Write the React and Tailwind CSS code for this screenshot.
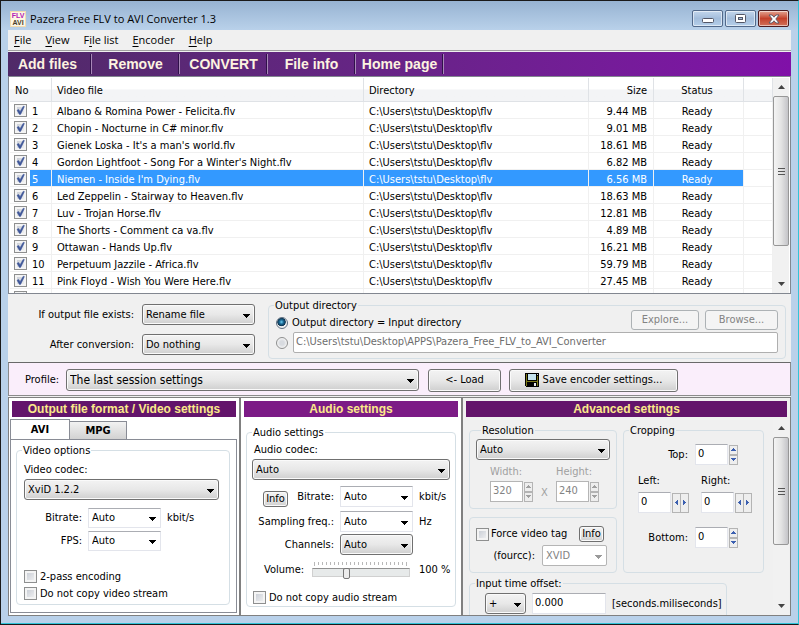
import React from "react";

const files = [
  ["Albano & Romina Power - Felicita.flv", "9.44 MB"],
  ["Chopin - Nocturne in C# minor.flv", "9.01 MB"],
  ["Gienek Loska - It's a man's world.flv", "18.61 MB"],
  ["Gordon Lightfoot - Song For a Winter's Night.flv", "6.82 MB"],
  ["Niemen - Inside I'm Dying.flv", "6.56 MB"],
  ["Led Zeppelin - Stairway to Heaven.flv", "18.63 MB"],
  ["Luv - Trojan Horse.flv", "12.81 MB"],
  ["The Shorts - Comment ca va.flv", "4.89 MB"],
  ["Ottawan - Hands Up.flv", "16.21 MB"],
  ["Perpetuum Jazzile - Africa.flv", "59.79 MB"],
  ["Pink Floyd - Wish You Were Here.flv", "27.45 MB"],
  ["", ""],
];

const raised =
  "rounded-[3px] border border-[#707070] bg-linear-to-b from-[#f3f3f3] via-[#e8e8e8] to-[#cfcfcf] shadow-[inset_0_0_0_1px_#fafafa]";
const flat = "border border-[#e3e5ec] border-t-[#abadb3] bg-white";

function Select({ className = "", look = "raised", value, disabled, arrow = "right-[5px]", ...rest }) {
  const style =
    look === "raised"
      ? raised
      : disabled
        ? "rounded-[2px] border border-[#b5b5b5] bg-white text-[#838383]"
        : flat;
  return (
    <span className={`relative block ${className}`}>
      <select
        className={`block h-full w-full appearance-none pr-4 pl-[3px] opacity-100 outline-none ${style}`}
        defaultValue={value}
        disabled={disabled}
        {...rest}
      >
        <option>{value}</option>
      </select>
      <svg
        viewBox="0 0 7 4"
        shapeRendering="crispEdges"
        className={`pointer-events-none absolute top-1/2 h-1 w-[7px] -translate-y-px ${arrow} ${disabled ? "text-[#9a9a9a]" : "text-black"}`}
      >
        <path d="M0 0h7v1H6v1H5v1H4v1H3V3H2V2H1V1H0z" fill="currentColor" />
      </svg>
    </span>
  );
}

function Check({ checked, ...rest }) {
  return (
    <span className="grid size-[13px] shrink-0">
      <input
        type="checkbox"
        defaultChecked={checked}
        className="peer col-start-1 row-start-1 size-[13px] appearance-none border border-[#8e8f8f] bg-linear-to-br from-[#c3c8d1] to-[#f6f6f6] shadow-[inset_0_0_0_2px_#f4f4f4]"
        {...rest}
      />
      <svg viewBox="0 0 13 13" className="pointer-events-none invisible col-start-1 row-start-1 size-[13px] peer-checked:visible">
        <path d="M3 6.2 4.8 5.6 6 7.8 9.3 2.2 10.4 2.6 6.6 10.4 5.4 10.4z" fill="#3f5799" stroke="#3f5799" strokeWidth=".5" />
      </svg>
    </span>
  );
}

function Radio(props) {
  return (
    <input
      type="radio"
      className="size-3 shrink-0 appearance-none rounded-full border border-[#8e8f8f] bg-[radial-gradient(circle,#d8dbe0_30%,#f4f4f4_70%)] checked:border-[#5f6f80] checked:bg-[radial-gradient(circle_at_45%_40%,#6fd0f4_0%,#1b6a95_25%,#0c3350_48%,#f0f0f0_56%)]"
      {...props}
    />
  );
}

function Group({ title, className = "", children }) {
  return (
    <fieldset className={`min-w-0 rounded-[4px] border border-[#d5dfe5] ${className}`}>
      {title && <legend className="ml-[5px] h-[10px] px-px leading-[12px] whitespace-nowrap">{title}</legend>}
      {children}
    </fieldset>
  );
}

function Tri({ dir, disabled }) {
  const d = {
    up: "M2 0h1v1h1v1h1v1H0V2h1V1h1z",
    down: "M0 0h5v1H4v1H3v1H2V2H1V1H0z",
    left: "M2 0h1v5H2V4H1V3H0V2h1V1h1z",
    right: "M0 0h1v1h1v1h1v1H2v1H1v1H0z",
  }[dir];
  const vertical = dir === "up" || dir === "down";
  return (
    <svg viewBox={vertical ? "0 0 5 3" : "0 0 3 5"} shapeRendering="crispEdges" className={vertical ? "h-[3px] w-[5px]" : "h-[5px] w-[3px]"}>
      <path d={d} fill={disabled ? "#a0a0a0" : "#3b5fb0"} />
    </svg>
  );
}

const spin = "flex items-center justify-center border border-[#b4b4b4] bg-[#eeeeee]";

function Stepper({ label, value, disabled, horizontal, id }) {
  return (
    <span className="flex items-center gap-px">
      <input
        id={id}
        type="text"
        defaultValue={value}
        disabled={disabled}
        className={`h-[21px] w-[33px] px-[2px] pb-[2px] outline-none ${disabled ? "border border-[#b5b5b5] bg-white text-[#838383]" : flat}`}
      />
      {horizontal ? (
        <span className="flex">
          <button aria-label={`Decrease ${label}`} className={`h-5 w-[9px] ${spin}`}><Tri dir="left" /></button>
          <button aria-label={`Increase ${label}`} className={`-ml-px h-5 w-[9px] ${spin}`}><Tri dir="right" /></button>
        </span>
      ) : (
        <span className="flex flex-col">
          <button aria-label={`Increase ${label}`} disabled={disabled} className={`h-[10px] w-[9px] ${spin}`}><Tri dir="up" disabled={disabled} /></button>
          <button aria-label={`Decrease ${label}`} disabled={disabled} className={`h-[10px] w-[9px] ${spin}`}><Tri dir="down" disabled={disabled} /></button>
        </span>
      )}
    </span>
  );
}

function ScrollBar({ thumb }) {
  return (
    <div className="flex w-4 shrink-0 flex-col bg-[#f1f1f1]">
      <button aria-label="Scroll up" className="flex h-[18px] items-center justify-center">
        <svg viewBox="0 0 7 4" className="h-1 w-[7px]"><path d="M3.5 0 7 4H0z" fill="#444" /></svg>
      </button>
      <div className={`flex flex-col items-center justify-center gap-[2px] rounded-[2px] border border-[#979797] bg-linear-to-r from-[#f4f4f4] via-[#e4e4e4] to-[#c4c4c8] ${thumb}`}>
        <i className="h-px w-[7px] bg-[#555]" />
        <i className="h-px w-[7px] bg-[#555]" />
        <i className="h-px w-[7px] bg-[#555]" />
      </div>
      <span className="flex-1" />
      <button aria-label="Scroll down" className="flex h-[18px] items-center justify-center">
        <svg viewBox="0 0 7 4" className="h-1 w-[7px]"><path d="M3.5 4 7 0H0z" fill="#444" /></svg>
      </button>
    </div>
  );
}

const heading = "h-4 shrink-0 text-center font-['Liberation_Sans',Arial,sans-serif] text-[12px] leading-4 font-bold text-[#fbe98a]";
const winButton = "flex h-[17px] items-center justify-center rounded-[2px] border shadow-[inset_0_0_0_1px_rgba(255,255,255,0.55)]";

function TitleBar() {
  return (
    <header className="flex h-[29px] shrink-0 items-center bg-linear-to-b from-[#97b3d2] to-[#b9d1ea] pr-[9px] pl-[9px]">
      <svg viewBox="0 0 16 16" className="mt-[6px] size-4" fontFamily="'Liberation Sans',Arial,sans-serif" fontWeight="bold" fontSize="7">
        <rect width="16" height="16" fill="#f3dcae" />
        <rect x="1" y="1" width="14" height="14" fill="#fdf6e4" />
        <text x="8" y="7" textAnchor="middle" fill="#b321b5">FLV</text>
        <text x="8" y="14" textAnchor="middle" fill="#4a3f2a">AVI</text>
      </svg>
      <h1 className="mt-[6px] ml-1 flex-1 font-['Open_Sans','Noto_Sans',sans-serif] text-[11px] leading-4 whitespace-nowrap">
        Pazera Free FLV to AVI Converter 1.3
      </h1>
      <div className="mt-[6px] flex gap-[2px]">
        <button aria-label="Minimize" className={`w-[31px] border-[#52698a] bg-linear-to-b from-[#c3d6ec] via-[#a3bddb] to-[#b5cfea] ${winButton}`}>
          <svg viewBox="0 0 12 5" className="mt-[3px] h-[5px] w-3"><rect x=".5" y=".5" width="11" height="4" rx="1" fill="#fff" stroke="#535666" /></svg>
        </button>
        <button aria-label="Maximize" className={`w-[31px] border-[#52698a] bg-linear-to-b from-[#c3d6ec] via-[#a3bddb] to-[#b5cfea] ${winButton}`}>
          <svg viewBox="0 0 11 9" className="h-[9px] w-[11px]">
            <rect x=".5" y=".5" width="10" height="8" rx="1" fill="#fff" stroke="#535666" />
            <rect x="3.5" y="3.5" width="4" height="2" fill="#a3bddb" stroke="#535666" />
          </svg>
        </button>
        <button aria-label="Close" className={`w-[31px] border-[#4b1a1f] bg-linear-to-b from-[#e2a493] via-[#c4402a] to-[#d0705a] ${winButton}`}>
          <svg viewBox="0 0 12 10" className="h-[10px] w-3">
            <path d="M1 1h3l2 2.2L8 1h3L7.8 5 11 9H8L6 6.8 4 9H1l3.200-4z" fill="#fff" stroke="#535666" strokeWidth=".9" />
          </svg>
        </button>
      </div>
    </header>
  );
}

function FileList() {
  const cell = "border-r border-b border-[#f0f0f0] p-0";
  const text = "block pt-1 leading-[12px]";
  return (
    <section className="flex h-[218px] shrink-0 border border-[#828790] bg-white pt-px pr-px pl-px">
      <div className="min-w-0 flex-1 overflow-hidden">
        <table className="w-full table-fixed border-separate border-spacing-0">
          <colgroup>
            <col className="w-[42px]" />
            <col />
            <col className="w-[225px]" />
            <col className="w-[65px]" />
            <col className="w-[90px]" />
            <col className="w-[29px]" />
          </colgroup>
          <thead>
            <tr className="h-6 bg-linear-to-b from-white from-45% to-[#f3f4f6] to-50% text-left [&>th]:border-r [&>th]:border-b [&>th]:border-[#dfe2e6] [&>th]:pt-[2px] [&>th]:font-normal">
              <th className="pl-[5px]">No</th>
              <th className="pl-[5px]">Video file</th>
              <th className="pl-[5px]">Directory</th>
              <th className="pr-[6px] text-right">Size</th>
              <th className="pr-[3px] text-center">Status</th>
              <th aria-label="Spare" />
            </tr>
          </thead>
          <tbody>
            {files.map(([name, size], i) => {
              const on = i === 4 ? "bg-[#3399ff] text-white" : "";
              return (
                <tr key={i} className="h-[17px] whitespace-nowrap">
                  <td className={cell}>
                    <span className="flex h-4 items-center">
                      <span className="flex w-5 justify-center"><Check checked aria-label={`Convert ${name || "next file"}`} /></span>
                      <span className={`h-4 flex-1 pl-[2px] ${text} ${on}`}>{name && i + 1}</span>
                    </span>
                  </td>
                  <td className={`${cell} ${on}`}><span className={`pl-[5px] ${text}`}>{name}</span></td>
                  <td className={`${cell} ${on}`}><span className={`pl-[5px] ${text}`}>{name && "C:\\Users\\tstu\\Desktop\\flv"}</span></td>
                  <td className={`${cell} ${on} text-right`}><span className={`pr-[6px] ${text}`}>{size}</span></td>
                  <td className={`${cell} ${on} text-center`}><span className={`pr-[3px] ${text}`}>{name && "Ready"}</span></td>
                  <td className={cell} />
                </tr>
              );
            })}
          </tbody>
        </table>
      </div>
      <ScrollBar thumb="h-[150px]" />
    </section>
  );
}

function Options() {
  const off = "h-5 rounded-[3px] border border-[#adb2b5] bg-[#f4f4f4] text-[#838383]";
  return (
    <section className="flex h-[68px] shrink-0 gap-[13px] pr-[5px]">
      <div className="grid w-[247px] content-start items-center justify-end gap-x-2 gap-y-[9px] pt-[10px] [grid-template-columns:auto_113px]">
        <label htmlFor="exists" className="text-right">If output file exists:</label>
        <Select id="exists" value="Rename file" className="h-[21px]" />
        <label htmlFor="after" className="text-right">After conversion:</label>
        <Select id="after" value="Do nothing" className="h-[21px]" />
      </div>
      <Group title="Output directory" className="mt-[6px] mb-[3px] flex-1">
        <div className="flex h-5 items-end gap-[6px] pr-[7px] pl-[7px]">
          <label className="flex flex-1 items-center gap-1 whitespace-nowrap">
            <Radio name="out" defaultChecked />
            Output directory = Input directory
          </label>
          <button disabled className={`w-[68px] ${off}`}>Explore...</button>
          <button disabled className={`w-[73px] ${off}`}>Browse...</button>
        </div>
        <div className="mt-[2px] flex h-[21px] items-center gap-[5px] pr-[7px] pl-[7px]">
          <Radio name="out" aria-label="Other directory" />
          <input
            aria-label="Output path"
            disabled
            defaultValue="C:\Users\tstu\Desktop\APPS\Pazera_Free_FLV_to_AVI_Converter"
            className="h-[21px] min-w-0 flex-1 rounded-[2px] border border-[#afafaf] bg-white px-[2px] pb-[2px] text-[#6d6d6d]"
          />
        </div>
      </Group>
    </section>
  );
}

function ProfileBar() {
  return (
    <section className="flex h-[34px] shrink-0 items-center border border-[#8b8b8b] border-t-[#696969] bg-[#faeefb] pt-[2px] pl-4">
      <label htmlFor="profile" className="w-[41px]">Profile:</label>
      <Select id="profile" value="The last session settings" className="h-[22px] w-[353px] text-[12px]" />
      <button className={`ml-[9px] h-[23px] w-[73px] ${raised}`}>&lt;- Load</button>
      <button className={`ml-2 flex h-[23px] w-[169px] items-center justify-center gap-1 whitespace-nowrap ${raised}`}>
        <svg viewBox="0 0 14 14" shapeRendering="crispEdges" className="size-[14px]">
          <path d="M0 0h14v14H1l-1-1z" fill="#000" />
          <path d="M1 1h1v12H1zM12 3h1v10h-1zM2 8h10v1H2z" fill="#7c7a18" />
          <path d="M3 1h8v6H3z" fill="#c5e3ee" />
          <path d="M12 1h1v1h-1z" fill="#d8d8d8" />
          <path d="M9 10h2v3H9z" fill="#e8e8e8" />
        </svg>
        Save encoder settings...
      </button>
    </section>
  );
}

function VideoPanel() {
  const tab = "border border-b-0 border-[#898c95] text-center font-['DejaVu_Sans_Condensed','DejaVu_Sans',sans-serif] text-[11px] font-bold";
  return (
    <section className="flex min-h-0 flex-col border border-[#808080] bg-white p-px">
      <h2 className={`mx-[2px] mt-[2px] bg-[#63146b] ${heading}`}>Output file format / Video settings</h2>
      <div role="tablist" className="mt-[2px] flex h-5 items-end">
        <button role="tab" aria-selected="true" className={`-mb-px h-[21px] w-[60px] bg-white ${tab}`}>AVI</button>
        <button role="tab" aria-selected="false" className={`h-[18px] w-[57px] border-l-0 bg-linear-to-b from-[#f2f2f2] to-[#d2d2d2] ${tab}`}>MPG</button>
      </div>
      <div className="mr-px mb-px min-h-0 flex-1 border border-[#898c95] px-[5px] pt-[5px]">
        <Group title="Video options" className="mr-px pb-[2px]">
          <div className="px-[7px] pt-2">
            <label htmlFor="vcodec" className="block leading-[14px]">Video codec:</label>
            <Select id="vcodec" value="XviD 1.2.2" className="mt-[2px] h-[21px] w-[195px]" />
            <div className="mt-2 grid grid-cols-[58px_73px_auto] items-center gap-x-[6px] gap-y-[3px]">
              <label htmlFor="vbit" className="text-right">Bitrate:</label>
              <Select id="vbit" look="flat" value="Auto" className="h-5" />
              <span>kbit/s</span>
              <label htmlFor="fps" className="text-right">FPS:</label>
              <Select id="fps" look="flat" value="Auto" className="h-5" />
            </div>
            <label className="mt-[17px] flex h-[17px] items-center gap-[3px]"><Check />2-pass encoding</label>
            <label className="flex h-[17px] items-center gap-[3px]"><Check />Do not copy video stream</label>
          </div>
        </Group>
      </div>
    </section>
  );
}

function AudioPanel() {
  const row = "grid grid-cols-[87px_73px_auto] items-center gap-x-[6px]";
  return (
    <section className="min-h-0 border border-[#808080] bg-white p-[3px]">
      <h2 className={`bg-[#7c1b86] ${heading}`}>Audio settings</h2>
      <Group title="Audio settings" className="mx-[2px] mt-[10px] pt-[6px]">
        <label htmlFor="acodec" className="block pl-[7px] leading-[14px]">Audio codec:</label>
        <Select id="acodec" value="Auto" className="mx-[5px] mt-[2px] h-[21px]" />
        <div className={`mt-[6px] ${row}`}>
          <span className="flex h-[21px] items-end justify-between pl-4">
            <button className={`h-4 w-[25px] leading-[14px] ${raised}`}>Info</button>
            <label htmlFor="abit" className="self-center">Bitrate:</label>
          </span>
          <Select id="abit" look="flat" value="Auto" className="h-[21px]" />
          <span>kbit/s</span>
        </div>
        <div className={`mt-1 ${row}`}>
          <label htmlFor="freq" className="text-right whitespace-nowrap">Sampling freq.:</label>
          <Select id="freq" look="flat" value="Auto" className="h-[21px]" />
          <span>Hz</span>
        </div>
        <div className={`mt-[2px] ${row}`}>
          <label htmlFor="chan" className="text-right">Channels:</label>
          <Select id="chan" value="Auto" className="h-[21px]" />
        </div>
        <div className="mt-1 flex h-[22px] items-center pl-[17px]">
          <label htmlFor="vol" className="w-12">Volume:</label>
          <span className="flex flex-col items-center gap-px">
            <svg viewBox="0 0 94 4" shapeRendering="crispEdges" className="h-1 w-[94px]">
              {Array.from({ length: 24 }, (_, i) => (
                <rect key={i} x={i * 4} width="1" height={i === 0 || i === 23 ? 4 : 3} fill="#b8b8b8" />
              ))}
            </svg>
            <input
              id="vol"
              type="range"
              defaultValue="34"
              className="block h-3 w-[98px] appearance-none bg-transparent [&::-webkit-slider-runnable-track]:h-[9px] [&::-webkit-slider-runnable-track]:border [&::-webkit-slider-runnable-track]:border-[#d0d0d0] [&::-webkit-slider-runnable-track]:border-t-[#909090] [&::-webkit-slider-runnable-track]:bg-[#e7eaea] [&::-webkit-slider-thumb]:h-[11px] [&::-webkit-slider-thumb]:w-[7px] [&::-webkit-slider-thumb]:-translate-y-px [&::-webkit-slider-thumb]:appearance-none [&::-webkit-slider-thumb]:rounded-[2px] [&::-webkit-slider-thumb]:border [&::-webkit-slider-thumb]:border-[#777] [&::-webkit-slider-thumb]:bg-[#ececec]"
            />
          </span>
          <output htmlFor="vol" className="ml-[9px] whitespace-nowrap">100 %</output>
        </div>
        <label className="mt-2 flex h-[17px] items-center gap-[3px] pl-[6px]"><Check />Do not copy audio stream</label>
      </Group>
    </section>
  );
}

function AdvancedPanel() {
  return (
    <section className="flex min-h-0 min-w-0 flex-col border border-[#808080]">
      <h2 className={`mx-[3px] mt-[3px] bg-[#63146b] ${heading}`}>Advanced settings</h2>
      <div className="flex min-h-0 flex-1 justify-between">
        <div className="min-w-0 overflow-hidden pt-2 pl-[6px]">
          <div className="flex gap-[6px]">
            <div className="flex w-[148px] flex-col gap-2">
              <Group title="Resolution" className="px-[6px] pt-1 pb-[6px]">
                <Select aria-label="Resolution" value="Auto" className="h-[21px]" />
                <div className="mt-[5px] flex gap-[7px] pl-[14px] leading-[14px] text-[#a0a0a0]">
                  <label className="w-[43px]">
                    Width:
                    <span className="mt-[2px] block"><Stepper label="width" value="320" disabled /></span>
                  </label>
                  <span className="w-[9px] self-end pb-[2px] text-center">X</span>
                  <label className="w-[43px]">
                    Height:
                    <span className="mt-[2px] block"><Stepper label="height" value="240" disabled /></span>
                  </label>
                </div>
              </Group>
              <Group className="px-[6px] pt-2 pb-[6px]">
                <div className="flex h-4 items-center justify-between pr-[6px]">
                  <label className="flex items-center gap-[2px] whitespace-nowrap"><Check />Force video tag</label>
                  <button className={`h-4 w-[25px] leading-[14px] ${raised}`}>Info</button>
                </div>
                <div className="mt-[3px] flex items-center justify-end gap-[7px] pr-[3px]">
                  <label htmlFor="fourcc">(fourcc):</label>
                  <Select id="fourcc" look="flat" disabled value="XVID" className="h-[21px] w-[65px]" />
                </div>
              </Group>
            </div>
            <Group title="Cropping" className="w-[141px] pt-[9px]">
              <div className="flex items-center gap-[7px]">
                <label htmlFor="ctop" className="w-16 text-right">Top:</label>
                <Stepper id="ctop" label="top" value="0" />
              </div>
              <div className="mt-[9px] flex gap-3 pl-[14px] leading-[14px]">
                <label>
                  Left:
                  <span className="mt-1 block"><Stepper label="left" value="0" horizontal /></span>
                </label>
                <label>
                  Right:
                  <span className="mt-1 block"><Stepper label="right" value="0" horizontal /></span>
                </label>
              </div>
              <div className="mt-[14px] flex items-center gap-[7px]">
                <label htmlFor="cbottom" className="w-16 text-right">Bottom:</label>
                <Stepper id="cbottom" label="bottom" value="0" />
              </div>
            </Group>
          </div>
          <Group title="Input time offset:" className="mt-[5px] w-[258px] pb-3">
            <div className="flex items-center gap-[6px] pt-[5px] pl-[15px]">
              <Select aria-label="Offset sign" value="+" className="h-[21px] w-[41px]" />
              <input aria-label="Offset" defaultValue="0.000" className={`h-[21px] w-[74px] px-[2px] pb-[2px] ${flat}`} />
              <span>[seconds.miliseconds]</span>
            </div>
          </Group>
        </div>
        <div className="mr-px flex pt-[2px]"><ScrollBar thumb="h-[108px]" /></div>
      </div>
    </section>
  );
}

const menu = ["File", "View", "File list", "Encoder", "Help"];
const accel = [0, 0, 1, 0, 0];
const tools = ["Add files", "Remove", "CONVERT", "File info", "Home page"];

export default function App() {
  return (
    <div className="flex h-screen flex-col border-t border-r border-b border-l border-[#1a1a1a] border-r-[#30c4d8] bg-[#b9d1ea] font-['DejaVu_Sans_Condensed','DejaVu_Sans','Noto_Sans',sans-serif] text-[11px] leading-[14px] text-black">
      <TitleBar />
      <main className="mr-[7px] ml-[7px] flex min-h-0 flex-1 flex-col bg-[#f0f0f0]">
        <nav className="flex h-[21px] shrink-0 items-center gap-[14px] border-b border-[#a0a0a0] pl-[6px] font-['Open_Sans','Noto_Sans',sans-serif] text-[11px]">
          {menu.map((m, i) => (
            <button key={m}>
              {m.slice(0, accel[i])}
              <span className="underline underline-offset-2">{m[accel[i]]}</span>
              {m.slice(accel[i] + 1)}
            </button>
          ))}
        </nav>
        <div className="mt-px flex h-6 shrink-0 items-center bg-linear-to-r from-[#502a68] to-[#8010a8] font-['Liberation_Sans',Arial,sans-serif] text-[14px] font-bold text-[#fdf3e0]">
          {tools.map((t, i) => (
            <button key={t} className={`h-5 border-r border-[#a888b8] text-center whitespace-nowrap shadow-[inset_-1px_0_0_#30104a] ${i === 0 ? "w-[84px] pr-1" : "w-[88px]"}`}>
              {t}
            </button>
          ))}
        </div>
        <FileList />
        <Options />
        <ProfileBar />
        <div className="mt-px grid min-h-0 flex-1 grid-cols-[232px_222px_1fr] grid-rows-[minmax(0,1fr)]">
          <VideoPanel />
          <AudioPanel />
          <AdvancedPanel />
        </div>
      </main>
      <div className="h-2 shrink-0 border-b border-[#30c4d8]" />
    </div>
  );
}
